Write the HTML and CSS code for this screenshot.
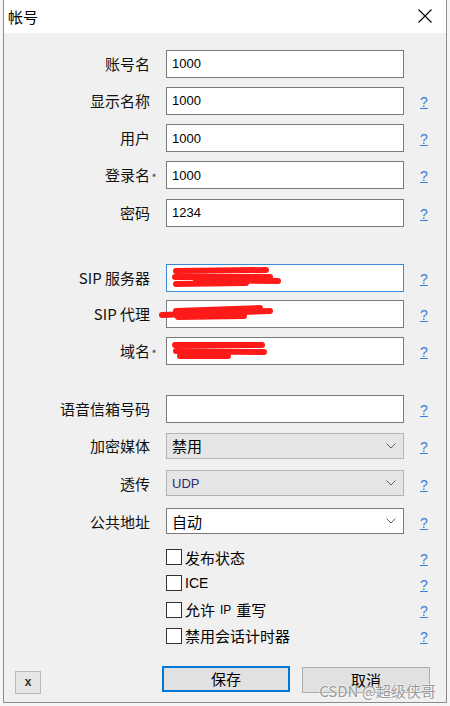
FILE: index.html
```html
<!DOCTYPE html>
<html lang="zh-CN">
<head>
    <meta charset="UTF-8">
    <meta name="viewport" content="width=device-width, initial-scale=1.0">
    <title>帐号</title>
    <link rel="stylesheet" href="styles.css">
</head>
<body>
    <div class="window">
        <div class="titlebar">
            <span class="title">帐号</span>
            <svg class="close" width="14" height="14" viewBox="0 0 14 14">
                <path d="M0.5 0.5 L13.5 13.5 M13.5 0.5 L0.5 13.5" stroke="#000" stroke-width="1.1" fill="none"/>
            </svg>
        </div>

        <div class="form">
            <!-- account -->
            <div class="group group-account">
                <label class="label">账号名<span class="star"></span></label>
                <div class="field"><input type="text" value="1000" readonly></div>
                <span></span>

                <label class="label">显示名称<span class="star"></span></label>
                <div class="field"><input type="text" value="1000" readonly></div>
                <a class="help" href="#">?</a>

                <label class="label">用户<span class="star"></span></label>
                <div class="field"><input type="text" value="1000" readonly></div>
                <a class="help" href="#">?</a>

                <label class="label">登录名<span class="star">*</span></label>
                <div class="field"><input type="text" value="1000" readonly></div>
                <a class="help" href="#">?</a>

                <label class="label">密码<span class="star"></span></label>
                <div class="field"><input type="text" value="1234" readonly></div>
                <a class="help" href="#">?</a>
            </div>

            <!-- server -->
            <div class="group group-server">
                <label class="label">SIP 服务器<span class="star"></span></label>
                <div class="field focused">
                    <input type="text" value="" readonly>
                    <svg class="scribble" width="238" height="29" viewBox="0 0 238 29">
                        <path d="M10 8 L100 7" />
                        <path d="M9 14 L104 14" stroke-width="8" />
                        <path d="M30 17 L112 18" stroke-width="5" />
                        <path d="M10 21 L80 20" stroke-width="6" />
                    </svg>
                </div>
                <a class="help" href="#">?</a>

                <label class="label">SIP 代理<span class="star"></span></label>
                <div class="field">
                    <input type="text" value="" readonly>
                    <svg class="scribble" width="238" height="28" viewBox="0 0 238 28">
                        <path d="M-4 15 L104 11" stroke-width="4" />
                        <path d="M10 11 L94 8" stroke-width="7" />
                        <path d="M12 17 L78 16" stroke-width="7" />
                    </svg>
                </div>
                <a class="help" href="#">?</a>

                <label class="label">域名<span class="star">*</span></label>
                <div class="field">
                    <input type="text" value="" readonly>
                    <svg class="scribble" width="238" height="28" viewBox="0 0 238 28">
                        <path d="M9 9 L96 9" stroke-width="7" />
                        <path d="M10 15 L98 16" stroke-width="7" />
                        <path d="M14 20 L62 20" stroke-width="5" />
                    </svg>
                </div>
                <a class="help" href="#">?</a>
            </div>

            <!-- media -->
            <div class="group group-media">
                <label class="label">语音信箱号码<span class="star"></span></label>
                <div class="field"><input type="text" value="" readonly></div>
                <a class="help" href="#">?</a>

                <label class="label">加密媒体<span class="star"></span></label>
                <div class="select disabled">
                    <span class="select-text">禁用</span>
                    <svg class="chevron" width="10" height="6" viewBox="0 0 10 6"><path d="M0.5 0.5 L5 5 L9.5 0.5"/></svg>
                </div>
                <a class="help" href="#">?</a>

                <label class="label">透传<span class="star"></span></label>
                <div class="select disabled">
                    <span class="select-text latin">UDP</span>
                    <svg class="chevron" width="10" height="6" viewBox="0 0 10 6"><path d="M0.5 0.5 L5 5 L9.5 0.5"/></svg>
                </div>
                <a class="help" href="#">?</a>

                <label class="label">公共地址<span class="star"></span></label>
                <div class="select">
                    <span class="select-text">自动</span>
                    <svg class="chevron" width="10" height="6" viewBox="0 0 10 6"><path d="M0.5 0.5 L5 5 L9.5 0.5"/></svg>
                </div>
                <a class="help" href="#">?</a>
            </div>

            <!-- options -->
            <div class="group group-options">
                <span></span>
                <div class="check"><span class="box"></span>发布状态</div>
                <a class="help" href="#">?</a>

                <span></span>
                <div class="check"><span class="box"></span><span class="latin">ICE</span></div>
                <a class="help" href="#">?</a>

                <span></span>
                <div class="check"><span class="box"></span>允许 <span class="latin small">IP</span> 重写</div>
                <a class="help" href="#">?</a>

                <span></span>
                <div class="check"><span class="box"></span>禁用会话计时器</div>
                <a class="help" href="#">?</a>
            </div>
        </div>

        <div class="footer">
            <button class="btn-x">x</button>
            <div class="actions">
                <button class="btn btn-default">保存</button>
                <button class="btn">取消</button>
            </div>
        </div>

        <div class="watermark">CSDN @超级侠哥</div>
    </div>
</body>
</html>
```

FILE: styles.css
```css
/* dialog */
body {
    margin: 0;
    background-color: #f6f6f6;
    font-family: "Noto Sans CJK SC", "Noto Sans", sans-serif;
    color: #000;
}

.window {
    position: relative;
    margin-left: 3px;
    width: 442px;
    height: 702px;
    border: 1px solid #8c8c8c;
    border-top: none;
    background: #f0f0f0;
}

.titlebar {
    height: 33px;
    background: #fff;
    display: flex;
    align-items: center;
    justify-content: space-between;
    padding: 0 14px 0 4px;
}

.title {
    font-size: 15px;
    line-height: 1;
}

.close {
    display: block;
    margin-top: -2px;
}

.form {
    padding-top: 16px;
}

.group {
    display: grid;
    grid-template-columns: 162px 238px 1fr;
    grid-auto-rows: 28px;
    align-items: center;
}

.group-account {
    row-gap: 9.25px;
}

.group-server {
    margin-top: 37px;
    row-gap: 8.5px;
}

.group-media {
    margin-top: 30px;
    row-gap: 9.7px;
}

.group-options {
    margin-top: 9px;
    grid-auto-rows: 26px;
    row-gap: 0.3px;
}

.label {
    display: flex;
    justify-content: flex-end;
    align-items: center;
    padding-right: 8px;
    font-size: 15px;
    color: #111;
    white-space: nowrap;
}

.star {
    display: inline-block;
    width: 8px;
    padding-top: 5px;
    font-size: 11px;
    color: #444;
    text-align: center;
}

.field {
    position: relative;
    height: 28px;
}

.field input {
    box-sizing: border-box;
    width: 100%;
    height: 100%;
    margin: 0;
    padding: 0 5px;
    border: 1px solid #7a7a7a;
    background: #fff;
    font-family: "Liberation Sans", Arial, sans-serif;
    font-size: 13px;
    color: #000;
    outline: none;
}

.field.focused input {
    border-color: #3c8ad6;
}

.scribble {
    position: absolute;
    left: 0;
    top: 0;
    overflow: visible;
    pointer-events: none;
}

.scribble path {
    stroke: #ff1a1a;
    stroke-width: 6;
    stroke-linecap: round;
    fill: none;
}

.select {
    box-sizing: border-box;
    height: 26px;
    display: flex;
    align-items: center;
    justify-content: space-between;
    padding: 0 7px 0 5px;
    border: 1px solid #7a7a7a;
    background: #fff;
    font-size: 15px;
}

.select.disabled {
    background: #e5e5e5;
    border-color: #b4b4b4;
}

.select-text.latin {
    font-family: "Liberation Sans", Arial, sans-serif;
    font-size: 13px;
    color: #2d2d6e;
}

.chevron path {
    stroke: #606060;
    stroke-width: 1;
    fill: none;
}

.help {
    padding-left: 16px;
    font-family: "Liberation Sans", Arial, sans-serif;
    font-size: 14px;
    color: #3b7dd6;
    text-decoration: underline;
    line-height: 1;
    margin-top: 3px;
}

.check {
    display: flex;
    align-items: center;
    gap: 3px;
    font-size: 15px;
    white-space: nowrap;
}

.check .latin {
    font-family: "Liberation Sans", Arial, sans-serif;
    font-size: 14px;
}

.check .small {
    font-size: 12px;
    margin: 0 2px;
}

.box {
    box-sizing: border-box;
    width: 16px;
    height: 16px;
    border: 1px solid #333;
    background: #fff;
}

.footer {
    display: flex;
    justify-content: space-between;
    align-items: flex-start;
    margin-top: 17px;
    padding: 0 16px 0 11px;
}

.btn-x {
    box-sizing: border-box;
    width: 26px;
    height: 23px;
    margin-top: 5px;
    padding: 0;
    border: 1px solid #b9b9b9;
    background: #e6e6e6;
    font-family: "Liberation Sans", Arial, sans-serif;
    font-size: 12px;
    font-weight: bold;
    color: #333;
}

.actions {
    display: flex;
    gap: 12px;
}

.btn {
    box-sizing: border-box;
    width: 128px;
    height: 26px;
    margin-top: 1px;
    padding: 0;
    border: 1px solid #adadad;
    background: #e1e1e1;
    font-family: "Noto Sans CJK SC", sans-serif;
    font-size: 15px;
    color: #000;
}

.btn-default {
    margin-top: 0;
    border: 2px solid #0078d7;
}

.watermark {
    position: absolute;
    right: 10px;
    bottom: 1px;
    font-size: 15px;
    color: #9a9a9a;
    text-shadow: 0 0 2px #fff, 0 0 1px #fff;
    white-space: nowrap;
}
```
